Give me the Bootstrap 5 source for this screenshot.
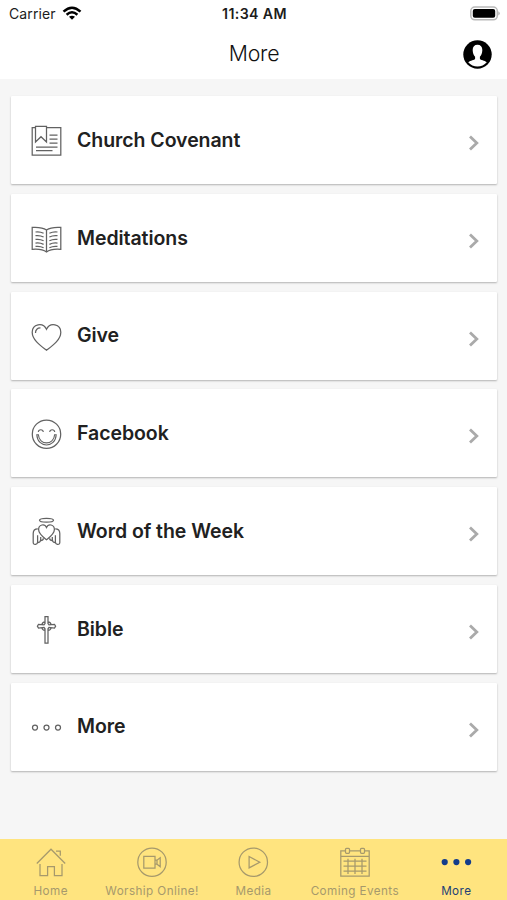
<!DOCTYPE html>
<html lang="en">
<head>
<meta charset="utf-8">
<meta name="viewport" content="width=device-width, initial-scale=1">
<title>More</title>
<link href="https://cdn.jsdelivr.net/npm/bootstrap@5.3.0/dist/css/bootstrap.min.css" rel="stylesheet">
<style>
body{font-family:Inter,"Liberation Sans",sans-serif;background:#f6f6f6;height:900px;color:#212121;overflow:hidden}
svg{display:block;fill:none;flex-shrink:0}
.top-area{height:79px}
.status{height:27px;font-size:14px;line-height:27px;color:#1c1c1c;padding:0 7px 0 9px}
.status .carrier{letter-spacing:.12px}
.status .carrier svg{margin-left:6px}
.status .clock{font-weight:600;font-size:14.2px;letter-spacing:.35px}
.title-bar{height:51px;padding:0 15px}
.title-bar h1{font-size:21.3px;font-weight:300;line-height:50px;letter-spacing:-.2px;color:#111;padding-left:1px}
.menu{padding:17px 10px 0 11px;gap:9.75px}
.menu-item{height:88px;border-radius:1px;box-shadow:0 1px 2px rgba(0,0,0,.28);padding:2px 16px 0 19px}
.menu-item .label{font-size:19.5px;font-weight:600;line-height:24px;letter-spacing:-.06px;margin:-2.5px 0 0 14px}
.menu-item .line-icon{stroke:#626262;stroke-width:1.25}
.menu-item .chevron{stroke:#aaa;stroke-width:2.8;margin-top:4px}
.tabs{height:61px;background:#ffe47f;color:#a6996c}
.tab{width:101.4px;padding-top:7px;font-size:11.7px;line-height:14px;letter-spacing:.42px;white-space:nowrap}
.tab svg{stroke:#a6996c;stroke-width:1.25;margin-bottom:6px}
.tab.current{color:#233f76}
.tab.current svg{fill:#133c8b;stroke:none}
</style>
<script src="https://cdn.jsdelivr.net/npm/bootstrap@5.3.0/dist/js/bootstrap.bundle.min.js"></script>
</head>
<body class="d-flex flex-column">
<header class="top-area bg-white">
  <div class="status d-flex align-items-center">
    <div class="carrier d-flex align-items-center flex-fill w-25">Carrier
      <svg width="20" height="16" viewBox="0 0 20 16" stroke="#000" stroke-width="2.5"><path d="M1.5 5.7Q10-2.1 18.5 5.7M4.6 8.7Q10 3.9 15.4 8.7"/><path d="M7 10.8Q10 8.5 13 10.8L10 13.7Z" fill="#000" stroke="none"/></svg>
    </div>
    <div class="clock">11:34 AM</div>
    <div class="d-flex justify-content-end flex-fill w-25">
      <svg width="30" height="16" viewBox="0 0 30 16"><rect x=".8" y="1" width="26.5" height="12.8" rx="4" fill="#fff" stroke="#b9b9b9" stroke-width="1.5"/><rect x="2.8" y="3" width="22.4" height="8.8" rx="2" fill="#000"/><path d="M28.4 5.2Q31 7.4 28.4 9.5Z" fill="#aaa"/></svg>
    </div>
  </div>
  <div class="title-bar d-flex align-items-center">
    <div class="flex-fill w-25"></div>
    <h1 class="m-0">More</h1>
    <div class="flex-fill w-25 d-flex justify-content-end">
      <svg class="mt-1" width="29" height="29" viewBox="0 0 29 29"><circle cx="14.5" cy="14.5" r="14.2" fill="#000"/><path d="M14.5 4.8C11.2 4.8 9.5 7 9.7 10.5C9.8 13 10.6 15.2 12.1 16.7V18.7C11.7 20.3 7.3 20.1 5.2 22.3A12.2 12.2 0 0 0 23.8 22.3C21.7 20.1 17.3 20.3 16.9 18.7V16.7C18.4 15.2 19.2 13 19.3 10.5C19.5 7 17.8 4.8 14.5 4.8Z" fill="#fff"/></svg>
    </div>
  </div>
</header>

<main class="menu d-flex flex-column flex-fill">
  <a class="menu-item bg-white d-flex align-items-center text-reset text-decoration-none" href="#">
    <svg class="line-icon" width="33" height="32" viewBox="0 0 33 32"><path d="M6 2.7H2.2V30H30.8V2.7H16.5M5.5 1.4H16.5V17L11 11.7L5.5 17ZM19.5 10H27.5M19.5 14H27.5M19.5 18H27.5M6 22H27.5M6 25.6H22.5"/></svg>
    <span class="label">Church Covenant</span><svg class="chevron ms-auto" width="14" height="18" viewBox="0 0 14 18"><path d="M3 2.5L9.8 9L3 15.5"/></svg>
  </a>
  <a class="menu-item bg-white d-flex align-items-center text-reset text-decoration-none" href="#">
    <svg class="line-icon" width="33" height="32" viewBox="0 0 33 32"><path d="M16.5 7Q12 3.8 2.2 4.4V26.3Q12 25.5 16.5 29Q21 25.5 30.8 26.3V4.4Q21 3.8 16.5 7V29M5.5 9Q10 8.4 13.6 10.3M5.5 12.7Q10 12.1 13.6 14M5.5 16.4Q10 15.8 13.6 17.7M5.5 20.1Q10 19.5 13.6 21.4M5.5 23.4Q10 22.8 13.6 24.7M27.5 9Q23 8.4 19.4 10.3M27.5 12.7Q23 12.1 19.4 14M27.5 16.4Q23 15.8 19.4 17.7M27.5 20.1Q23 19.5 19.4 21.4M27.5 23.4Q23 22.8 19.4 24.7"/></svg>
    <span class="label">Meditations</span><svg class="chevron ms-auto" width="14" height="18" viewBox="0 0 14 18"><path d="M3 2.5L9.8 9L3 15.5"/></svg>
  </a>
  <a class="menu-item bg-white d-flex align-items-center text-reset text-decoration-none" href="#">
    <svg class="line-icon" width="33" height="32" viewBox="0 0 33 32"><path d="M16.5 29.2C11 25 2.2 19 2.2 11.2C2.2 2.8 13 .8 16.5 8.3C20 .8 30.8 2.8 30.8 11.2C30.8 19 22 25 16.5 29.2ZM5.5 12C5.4 8.8 7.5 6.9 10.5 7"/></svg>
    <span class="label">Give</span><svg class="chevron ms-auto" width="14" height="18" viewBox="0 0 14 18"><path d="M3 2.5L9.8 9L3 15.5"/></svg>
  </a>
  <a class="menu-item bg-white d-flex align-items-center text-reset text-decoration-none" href="#">
    <svg class="line-icon" width="33" height="32" viewBox="0 0 33 32"><circle cx="16.5" cy="16.2" r="14.2"/><path d="M8.3 14C8.6 10.9 13 10.9 13.3 14M19.7 14C20 10.9 24.4 10.9 24.7 14M6.8 16.8H8.4C9 27.6 24 27.6 24.6 16.8H26.2C25.6 30.4 7.4 30.4 6.8 16.8Z" stroke-width="1.1"/></svg>
    <span class="label">Facebook</span><svg class="chevron ms-auto" width="14" height="18" viewBox="0 0 14 18"><path d="M3 2.5L9.8 9L3 15.5"/></svg>
  </a>
  <a class="menu-item bg-white d-flex align-items-center text-reset text-decoration-none" href="#">
    <svg class="line-icon" width="33" height="32" viewBox="0 0 33 32"><ellipse cx="16.5" cy="4.3" rx="7" ry="1.9"/><path d="M16.5 23.8C13 21 8.6 17.8 8.6 13.5C8.6 8.5 14.7 7.2 16.5 11.5C18.3 7.2 24.4 8.5 24.4 13.5C24.4 17.8 20 21 16.5 23.8ZM7.8 12.8C5 12.8 3.2 14.5 3.2 17.5V26.5Q3.4 28.8 5.6 28.4Q7.6 28.1 7.6 26V19.3M7.6 26.6Q10.5 26.6 10.7 23.8V21M10.7 24.6Q13.2 24.6 13.4 22.4M25.2 12.8C28 12.8 29.8 14.5 29.8 17.5V26.5Q29.6 28.8 27.4 28.4Q25.4 28.1 25.4 26V19.3M25.4 26.6Q22.5 26.6 22.3 23.8V21M22.3 24.6Q19.8 24.6 19.6 22.4"/></svg>
    <span class="label">Word of the Week</span><svg class="chevron ms-auto" width="14" height="18" viewBox="0 0 14 18"><path d="M3 2.5L9.8 9L3 15.5"/></svg>
  </a>
  <a class="menu-item bg-white d-flex align-items-center text-reset text-decoration-none" href="#">
    <svg class="line-icon" width="33" height="32" viewBox="0 0 33 32"><path d="M15 2.7H18V9.6L19 10.8L24.5 10.3L25.6 12.2L24.5 14L19 13.5L18 14.8V29H15V14.8L14 13.5L8.5 14L7.4 12.2L8.5 10.3L14 10.8L15 9.6ZM15 7.8Q12.2 8 11.9 10.6M18 7.8Q20.8 8 21.1 10.6M15 16.5Q12.2 16.3 11.9 13.8M18 16.5Q20.8 16.3 21.1 13.8"/></svg>
    <span class="label">Bible</span><svg class="chevron ms-auto" width="14" height="18" viewBox="0 0 14 18"><path d="M3 2.5L9.8 9L3 15.5"/></svg>
  </a>
  <a class="menu-item bg-white d-flex align-items-center text-reset text-decoration-none" href="#">
    <svg class="line-icon" width="33" height="32" viewBox="0 0 33 32"><circle cx="5" cy="15.6" r="2.5"/><circle cx="16.5" cy="15.6" r="2.5"/><circle cx="28" cy="15.6" r="2.5"/></svg>
    <span class="label">More</span><svg class="chevron ms-auto" width="14" height="18" viewBox="0 0 14 18"><path d="M3 2.5L9.8 9L3 15.5"/></svg>
  </a>
</main>

<nav class="tabs d-flex">
  <div class="tab d-flex flex-column align-items-center"><svg width="32" height="32" viewBox="0 0 32 32"><path d="M1.8 17.5L16 3.2L30.2 17.5M21 5H25.3V9.8M5 18V29.5H12.6V20.5H19.4V29.5H27V18"/></svg>Home</div>
  <div class="tab d-flex flex-column align-items-center"><svg width="32" height="32" viewBox="0 0 32 32"><circle cx="16" cy="16.2" r="14.2"/><path d="M7.8 10.4H19V22H7.8ZM19 14.2H21L24.2 11.7V20.7L21 18.2H19M21 14.2V18.2"/></svg>Worship Online!</div>
  <div class="tab d-flex flex-column align-items-center"><svg width="32" height="32" viewBox="0 0 32 32"><circle cx="16.3" cy="16.2" r="14.2"/><path d="M12.1 10.5L22.8 16.2L12.1 21.9Z"/></svg>Media</div>
  <div class="tab d-flex flex-column align-items-center"><svg width="32" height="32" viewBox="0 0 32 32"><path d="M6.5 4.8H1.8V30.2H30.2V4.8H25.5M10.5 4.8H21.5M1.8 10.4H30.2M4.5 15.2H27.5M4.5 20.2H27.5M4.5 25.2H27.5M9 12.7V28M16 12.7V28M23 12.7V28"/><rect x="6.5" y="2.3" width="4" height="5" rx="1"/><rect x="21.5" y="2.3" width="4" height="5" rx="1"/></svg>Coming Events</div>
  <div class="tab current d-flex flex-column align-items-center"><svg width="32" height="32" viewBox="0 0 32 32"><circle cx="4.7" cy="16.1" r="3.1"/><circle cx="16.4" cy="16.1" r="3.1"/><circle cx="28.1" cy="16.1" r="3.1"/></svg>More</div>
</nav>
</body>
</html>
